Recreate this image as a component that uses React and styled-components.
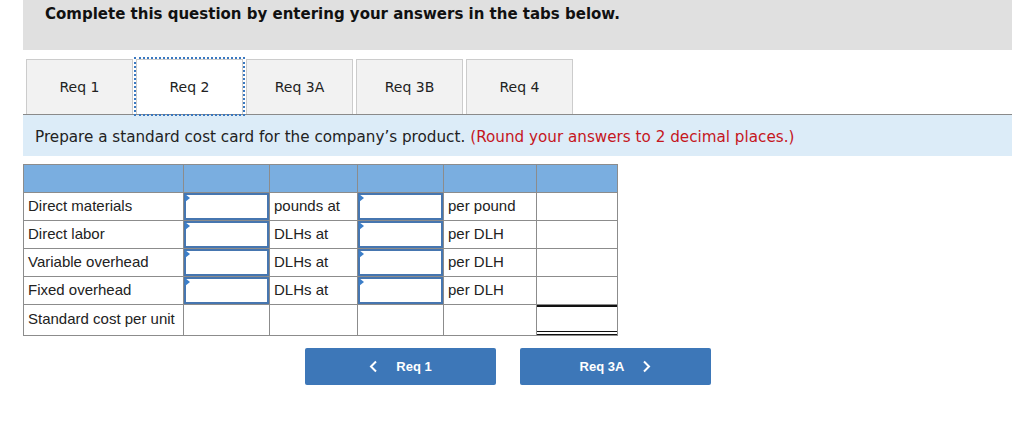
import React from 'react'
import styled, {createGlobalStyle} from 'styled-components'

const GlobalStyle = createGlobalStyle`
  body {
    margin: 0;
    background: #fff;
    font-family: "DejaVu Sans", Verdana, sans-serif;
    color: #222;
  }
`

const Page = styled.div`
  padding: 0 12px 0 23px;
`

const Header = styled.div`
  background: #e0e0e0;
  height: 50px;
  box-sizing: border-box;
  padding: 5px 0 0 22px;
  font-family: "DejaVu Sans", Verdana, sans-serif;
  font-weight: bold;
  font-size: 15px;
  color: #111;
`

const TabBar = styled.div`
  display: flex;
  gap: 3px;
  margin-top: 9px;
  padding-left: 3px;
  border-bottom: 1px solid #8a8a8a;
`

const Tab = styled.div`
  width: 107px;
  height: 55px;
  box-sizing: border-box;
  display: flex;
  align-items: center;
  justify-content: center;
  font-size: 14px;
  color: #222;
  background: ${props => props.active ? '#fff' : '#f2f2f2'};
  border: 1px solid #ccc;
  border-bottom: none;
  ${props => props.active && `
    outline: 2px dotted #3a78c0;
    outline-offset: 0;
  `}
`

const Instruction = styled.div`
  background: #dcecf8;
  height: 41px;
  box-sizing: border-box;
  padding: 2px 0 0 12px;
  display: flex;
  align-items: center;
  font-size: 15.2px;
  color: #222;
`

const Red = styled.span`
  color: #c5161d;
  margin-left: 5px;
`

const Table = styled.table`
  margin-top: 8px;
  border-collapse: collapse;
  table-layout: fixed;
  width: 594px;
  font-family: "Liberation Sans", Arial, sans-serif;
  font-size: 15px;
  color: #222;
`

const HeadCell = styled.th`
  background: #7aaee0;
  border: 1px solid #8c8c8c;
  height: 27px;
  padding: 0;
`

const Cell = styled.td`
  border: 1px solid #8c8c8c;
  height: 27px;
  box-sizing: border-box;
  padding: ${props => props.input ? '0' : '0 4px 2px'};
  position: relative;
  white-space: nowrap;
  ${props => props.tall && 'height: 30px; padding-bottom: 4px;'}
  ${props => props.input && 'padding: 0; vertical-align: top;'}
`

const InputBox = styled.div`
  box-sizing: border-box;
  height: 27px;
  width: 100%;
  border: 2px solid #4676b0;
  background: #fff;
`

const Marker = styled.span`
  position: absolute;
  z-index: 1;
  top: 1px;
  left: 1px;
  width: 0;
  height: 0;
  border-top: 4px solid transparent;
  border-bottom: 4px solid transparent;
  border-left: 5px solid #3c7ec8;
`

const TotalBox = styled.div`
  box-sizing: border-box;
  height: 30px;
  border-top: 2px solid #111;
  border-bottom: 4px double #111;
`

const NavRow = styled.div`
  display: flex;
  gap: 24px;
  margin-top: 12px;
  padding-left: 282px;
`

const NavButton = styled.button`
  width: 191px;
  height: 37px;
  background: #3d77b8;
  border: none;
  border-radius: 2px;
  color: #fff;
  font-family: "Liberation Sans", Arial, sans-serif;
  font-weight: bold;
  font-size: 13px;
  display: flex;
  align-items: center;
  justify-content: center;
  gap: 18px;
  cursor: pointer;
`

const Chevron = ({dir}) => (
  <svg width="9" height="13" viewBox="0 0 9 13">
    <path
      d={dir === 'left' ? 'M7 1.5 L2 6.5 L7 11.5' : 'M2 1.5 L7 6.5 L2 11.5'}
      fill="none"
      stroke="#fff"
      strokeWidth="2"
    />
  </svg>
)

const rows = [
  {label: 'Direct materials', unit: 'pounds at', rate: 'per pound'},
  {label: 'Direct labor', unit: 'DLHs at', rate: 'per DLH'},
  {label: 'Variable overhead', unit: 'DLHs at', rate: 'per DLH'},
  {label: 'Fixed overhead', unit: 'DLHs at', rate: 'per DLH'},
]

const tabs = ['Req 1', 'Req 2', 'Req 3A', 'Req 3B', 'Req 4']

const colWidths = [160, 86, 88, 86, 93, 81]

export default function App() {
  return (
    <Page>
      <GlobalStyle />
      <Header>Complete this question by entering your answers in the tabs below.</Header>
      <TabBar>
        {tabs.map(t => <Tab key={t} active={t === 'Req 2'}>{t}</Tab>)}
      </TabBar>
      <Instruction>
        Prepare a standard cost card for the company’s product.
        <Red>(Round your answers to 2 decimal places.)</Red>
      </Instruction>
      <Table>
        <colgroup>
          {colWidths.map((w, i) => <col key={i} style={{width: w}} />)}
        </colgroup>
        <thead>
          <tr>{colWidths.map((w, i) => <HeadCell key={i} />)}</tr>
        </thead>
        <tbody>
          {rows.map(r => (
            <tr key={r.label}>
              <Cell>{r.label}</Cell>
              <Cell input><Marker /><InputBox /></Cell>
              <Cell>{r.unit}</Cell>
              <Cell input><Marker /><InputBox /></Cell>
              <Cell>{r.rate}</Cell>
              <Cell />
            </tr>
          ))}
          <tr>
            <Cell tall>Standard cost per unit</Cell>
            <Cell tall />
            <Cell tall />
            <Cell tall />
            <Cell tall />
            <Cell tall input><TotalBox /></Cell>
          </tr>
        </tbody>
      </Table>
      <NavRow>
        <NavButton><Chevron dir="left" />Req 1</NavButton>
        <NavButton>Req 3A<Chevron dir="right" /></NavButton>
      </NavRow>
    </Page>
  )
}
